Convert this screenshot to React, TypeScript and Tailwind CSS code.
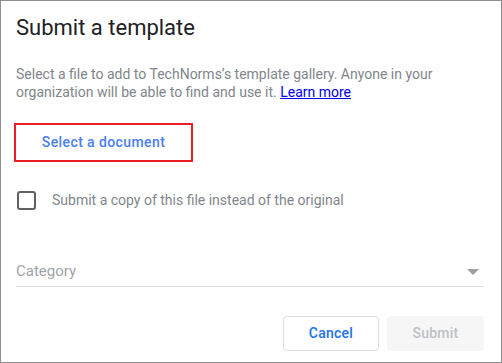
import React from "react";

export default function App() {
  return (
    <div
      className="w-[502px] h-[363px] bg-white border border-[#8f8f8f] box-border flex flex-col pl-[15px] pr-[16px]"
      style={{ fontFamily: "Roboto, 'Noto Sans', sans-serif" }}
    >
      <h1 className="mt-[12px] text-[22px] leading-[30px] text-[#202124] font-normal">
        Submit a template
      </h1>
      <p className="mt-[22px] text-[14px] leading-[18px] text-[#80868b] pr-[50px]">
        Select a file to add to TechNorms’s template gallery. Anyone in your
        organization will be able to find and use it.{" "}
        <a href="#" className="text-[#0000ee] underline">
          Learn more
        </a>
      </p>
      <div className="mt-[22px]">
        <button className="-ml-[2px] w-[179px] h-[39px] border-2 border-[#ea1c25] text-[#4a7ef0] text-[14px] font-medium tracking-[0.4px] flex items-center justify-center">
          Select a document
        </button>
      </div>
      <label className="mt-[27px] flex items-center h-[22px]">
        <span className="ml-[1px] w-[19px] h-[19px] border-2 border-[#616161] rounded-[3px] box-border" />
        <span className="ml-[16px] text-[14px] text-[#80868b]">
          Submit a copy of this file instead of the original
        </span>
      </label>
      <div className="mt-[42px] flex items-center justify-between border-b border-[#dadce0] h-[34px] pb-[2px] mr-[1px]">
        <span className="text-[15px] text-[#a0a4a8] pt-[6px]">Category</span>
        <svg width="12" height="6" viewBox="0 0 12 6" className="mr-[5px] mt-[6px]">
          <path d="M0 0 L12 0 L6 6 Z" fill="#9e9e9e" />
        </svg>
      </div>
      <div className="mt-[29px] flex justify-end gap-[8px] mr-[1px]">
        <button className="w-[96px] h-[35px] border border-[#dadce0] rounded-[4px] text-[#1a73e8] text-[14px] font-medium tracking-[0.25px]">
          Cancel
        </button>
        <button className="w-[97px] h-[35px] rounded-[4px] bg-[#f6f6f6] text-[#bdc1c6] text-[14px] font-medium tracking-[0.25px]">
          Submit
        </button>
      </div>
    </div>
  );
}
